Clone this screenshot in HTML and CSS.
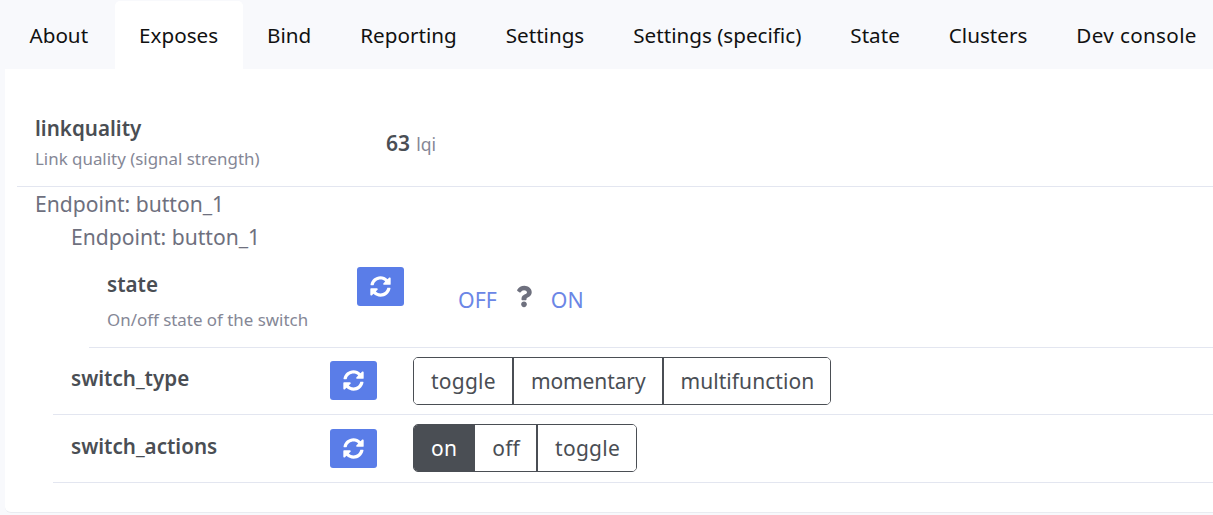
FILE: index.html
```html
<!DOCTYPE html>
<html lang="en">
<head>
    <meta charset="UTF-8">
    <meta name="viewport" content="width=device-width, initial-scale=1.0">
    <title>Exposes</title>
    <link rel="stylesheet" href="styles.css">
</head>
<body>
    <nav class="tabs">
        <a class="tab" href="#">About</a>
        <a class="tab active" href="#">Exposes</a>
        <a class="tab" href="#">Bind</a>
        <a class="tab" href="#">Reporting</a>
        <a class="tab" href="#">Settings</a>
        <a class="tab" href="#">Settings (specific)</a>
        <a class="tab" href="#">State</a>
        <a class="tab" href="#">Clusters</a>
        <a class="tab" href="#">Dev console</a>
    </nav>

    <main class="card">
        <div class="row row-link">
            <div class="label label-link">
                <div class="name">linkquality</div>
                <div class="desc">Link quality (signal strength)</div>
            </div>
            <div class="reading"><b>63</b> <span>lqi</span></div>
        </div>

        <div class="endpoint">Endpoint: button_1</div>
        <div class="nested">
            <div class="endpoint">Endpoint: button_1</div>
            <div class="nested">
                <div class="row row-state">
                    <div class="label label-state">
                        <div class="name">state</div>
                        <div class="desc">On/off state of the switch</div>
                    </div>
                    <button class="refresh">
                        <svg viewBox="0 0 512 512"><path d="M370.72 133.28C339.458 104.008 298.888 87.962 255.848 88c-77.458.068-144.328 53.178-162.791 126.85-1.344 5.363-6.122 9.15-11.651 9.15H24.103c-7.498 0-13.194-6.807-11.807-14.176C33.933 94.924 134.813 8 256 8c66.448 0 126.791 26.136 171.315 68.685L463.03 40.97C478.149 25.851 504 36.559 504 57.941V192c0 13.255-10.745 24-24 24H345.941c-21.382 0-32.09-25.851-16.971-40.971l41.75-41.749zM32 296h134.059c21.382 0 32.09 25.851 16.971 40.971l-41.75 41.75c31.262 29.273 71.835 45.319 114.876 45.28 77.418-.07 144.315-53.144 162.787-126.849 1.344-5.363 6.122-9.15 11.651-9.15h57.304c7.498 0 13.194 6.807 11.807 14.176C478.067 417.076 377.187 504 256 504c-66.448 0-126.791-26.136-171.315-68.685L48.97 471.03C33.851 486.149 8 475.441 8 454.059V320c0-13.255 10.745-24 24-24z"/></svg>
                    </button>
                    <div class="toggle-state">
                        <a href="#">OFF</a>
                        <svg class="question" viewBox="0 0 384 512"><path d="M202.021 0C122.202 0 70.503 32.703 29.914 91.026c-7.363 10.58-5.093 25.086 5.178 32.874l43.138 32.709c10.373 7.865 25.132 6.026 33.253-4.148 25.049-31.381 43.63-49.449 82.757-49.449 30.764 0 68.816 19.799 68.816 49.631 0 22.552-18.617 34.134-48.993 51.164-35.423 19.86-82.299 44.576-82.299 106.405V320c0 13.255 10.745 24 24 24h72.471c13.255 0 24-10.745 24-24v-5.773c0-42.86 125.268-44.645 125.268-160.627C377.504 66.256 286.902 0 202.021 0zM192 373.459c-38.196 0-69.271 31.075-69.271 69.271 0 38.195 31.075 69.27 69.271 69.27s69.271-31.075 69.271-69.271-31.075-69.27-69.271-69.27z"/></svg>
                        <a href="#">ON</a>
                    </div>
                </div>
            </div>
            <div class="row row-enum">
                <div class="name name-enum">switch_type</div>
                <button class="refresh">
                    <svg viewBox="0 0 512 512"><path d="M370.72 133.28C339.458 104.008 298.888 87.962 255.848 88c-77.458.068-144.328 53.178-162.791 126.85-1.344 5.363-6.122 9.15-11.651 9.15H24.103c-7.498 0-13.194-6.807-11.807-14.176C33.933 94.924 134.813 8 256 8c66.448 0 126.791 26.136 171.315 68.685L463.03 40.97C478.149 25.851 504 36.559 504 57.941V192c0 13.255-10.745 24-24 24H345.941c-21.382 0-32.09-25.851-16.971-40.971l41.75-41.749zM32 296h134.059c21.382 0 32.09 25.851 16.971 40.971l-41.75 41.75c31.262 29.273 71.835 45.319 114.876 45.28 77.418-.07 144.315-53.144 162.787-126.849 1.344-5.363 6.122-9.15 11.651-9.15h57.304c7.498 0 13.194 6.807 11.807 14.176C478.067 417.076 377.187 504 256 504c-66.448 0-126.791-26.136-171.315-68.685L48.97 471.03C33.851 486.149 8 475.441 8 454.059V320c0-13.255 10.745-24 24-24z"/></svg>
                </button>
                <div class="btn-group">
                    <button class="btn">toggle</button>
                    <button class="btn btn-long">momentary</button>
                    <button class="btn btn-wide">multifunction</button>
                </div>
            </div>
            <div class="row row-enum">
                <div class="name name-enum">switch_actions</div>
                <button class="refresh">
                    <svg viewBox="0 0 512 512"><path d="M370.72 133.28C339.458 104.008 298.888 87.962 255.848 88c-77.458.068-144.328 53.178-162.791 126.85-1.344 5.363-6.122 9.15-11.651 9.15H24.103c-7.498 0-13.194-6.807-11.807-14.176C33.933 94.924 134.813 8 256 8c66.448 0 126.791 26.136 171.315 68.685L463.03 40.97C478.149 25.851 504 36.559 504 57.941V192c0 13.255-10.745 24-24 24H345.941c-21.382 0-32.09-25.851-16.971-40.971l41.75-41.749zM32 296h134.059c21.382 0 32.09 25.851 16.971 40.971l-41.75 41.75c31.262 29.273 71.835 45.319 114.876 45.28 77.418-.07 144.315-53.144 162.787-126.849 1.344-5.363 6.122-9.15 11.651-9.15h57.304c7.498 0 13.194 6.807 11.807 14.176C478.067 417.076 377.187 504 256 504c-66.448 0-126.791-26.136-171.315-68.685L48.97 471.03C33.851 486.149 8 475.441 8 454.059V320c0-13.255 10.745-24 24-24z"/></svg>
                </button>
                <div class="btn-group">
                    <button class="btn selected">on</button>
                    <button class="btn">off</button>
                    <button class="btn">toggle</button>
                </div>
            </div>
        </div>
    </main>
</body>
</html>
```

FILE: styles.css
```css
html, body {
    height: 100%;
}
body {
    margin: 0;
    overflow: hidden;
    background-color: #f8f9fc;
    color: #4a4e54;
    font-family: "Noto Sans", "Open Sans", sans-serif;
    font-size: 20px;
}
.tabs {
    display: flex;
    height: 69px;
    padding: 1px 0 0 5px;
    box-sizing: border-box;
    white-space: nowrap;
}
.tab {
    display: flex;
    align-items: center;
    padding: 0 24.5px;
    color: #111;
    font-size: 20.65px;
    text-decoration: none;
    border-radius: 5px 5px 0 0;
}
.tab:first-child {
    padding-right: 26.5px;
}
.tab:last-child {
    letter-spacing: .35px;
}
.tab.active {
    background-color: #fff;
}
.card {
    height: 444px;
    margin-left: 5px;
    padding: 0 0 0 12px;
    box-sizing: border-box;
    background-color: #fff;
    border-radius: 0 0 0 6px;
    border-bottom: 1px solid #e9ecf1;
}
.row {
    display: flex;
    border-bottom: 1px solid #e3e6f0;
    padding-left: 18px;
}
.row-link {
    height: 118px;
    box-sizing: border-box;
    padding-top: 30px;
    align-items: center;
}
.label-link {
    width: 351px;
}
.name {
    font-size: 20.6px;
    font-weight: 600;
    line-height: 27px;
}
.desc {
    margin-top: 5.5px;
    color: #858796;
    font-size: 16.9px;
    line-height: 22px;
}
.reading b {
    font-size: 21px;
    font-weight: 600;
}
.reading span {
    color: #858796;
    font-size: 17.5px;
    margin-left: 1px;
}
.endpoint {
    padding-left: 18px;
    color: #6e707e;
    font-size: 21.1px;
    line-height: 33px;
}
.nested {
    margin-left: 36px;
}
.row-state {
    height: 95px;
    box-sizing: border-box;
    padding-top: 14px;
}
.label-state {
    width: 250px;
    padding-top: 4px;
}
.label-state .desc {
    margin-top: 11px;
}
.refresh {
    display: flex;
    align-items: center;
    justify-content: center;
    width: 47px;
    height: 39px;
    padding: 0;
    border: 0;
    border-radius: 3px;
    background-color: #5a7de8;
}
.refresh svg {
    width: 21px;
    height: 21px;
    fill: #fff;
}
.toggle-state {
    display: flex;
    align-items: center;
    gap: 19px;
    height: 24px;
    margin: 20px 0 0 54px;
}
.toggle-state a {
    color: #6b86e6;
    font-size: 21.3px;
    text-decoration: none;
}
.question {
    width: 16px;
    height: 23px;
    fill: #6e707e;
    margin-top: -5px;
}
.row-enum {
    height: 67.4px;
    box-sizing: border-box;
    padding-top: 13.2px;
    align-items: flex-start;
}
.name-enum {
    width: 259px;
    margin-top: 4px;
}
.row-enum .refresh {
    margin-right: 36px;
}
.btn-group {
    display: flex;
    margin-top: -4.3px;
    border: 1px solid #4a4e54;
    border-radius: 5px;
    overflow: hidden;
}
.btn {
    height: 46px;
    padding: 0 16px 0 17px;
    border: 0;
    border-left: 2px solid #4a4e54;
    background-color: #fff;
    color: #4a4e54;
    font-family: inherit;
    font-size: 21px;
    letter-spacing: .25px;
}
.btn:first-child {
    border-left: 0;
}
.btn-long {
    letter-spacing: -.1px;
}
.btn-wide {
    letter-spacing: .05px;
}
.btn.selected {
    background-color: #4a4e54;
    color: #fff;
}
```
